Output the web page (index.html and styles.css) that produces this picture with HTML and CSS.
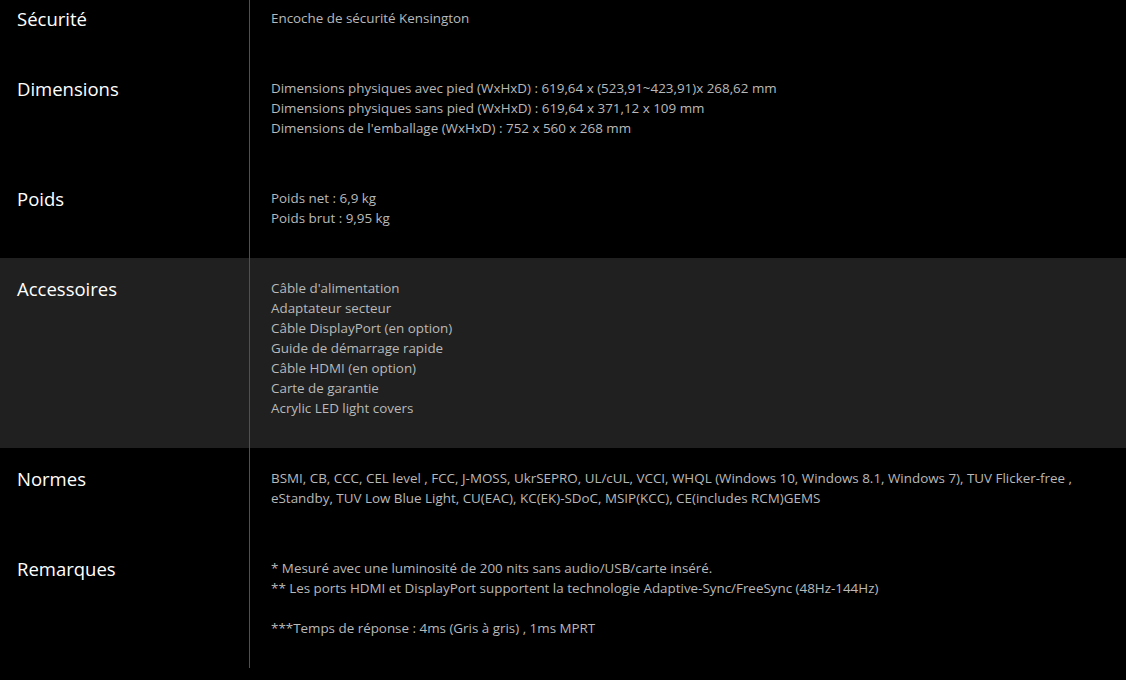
FILE: index.html
```html
<!DOCTYPE html>
<html lang="fr">
<head>
  <meta charset="UTF-8">
  <title>Caractéristiques</title>
  <link rel="stylesheet" href="styles.css">
</head>
<body>
  <div class="specs">
    <div class="spec first">
      <div class="spec-name">Sécurité</div>
      <div class="spec-value">
        <p>Encoche de sécurité Kensington</p>
      </div>
    </div>

    <div class="spec">
      <div class="spec-name">Dimensions</div>
      <div class="spec-value">
        <p>Dimensions physiques avec pied (WxHxD) : 619,64 x (523,91~423,91)x 268,62 mm</p>
        <p>Dimensions physiques sans pied (WxHxD) : 619,64 x 371,12 x 109 mm</p>
        <p>Dimensions de l'emballage (WxHxD) : 752 x 560 x 268 mm</p>
      </div>
    </div>

    <div class="spec">
      <div class="spec-name">Poids</div>
      <div class="spec-value">
        <p>Poids net : 6,9 kg</p>
        <p>Poids brut : 9,95 kg</p>
      </div>
    </div>

    <div class="spec shaded">
      <div class="spec-name">Accessoires</div>
      <div class="spec-value">
        <p>Câble d'alimentation</p>
        <p>Adaptateur secteur</p>
        <p>Câble DisplayPort (en option)</p>
        <p>Guide de démarrage rapide</p>
        <p>Câble HDMI (en option)</p>
        <p>Carte de garantie</p>
        <p>Acrylic LED light covers</p>
      </div>
    </div>

    <div class="spec">
      <div class="spec-name">Normes</div>
      <div class="spec-value">
        <p>BSMI, CB, CCC, CEL level , FCC, J-MOSS, UkrSEPRO, UL/cUL, VCCI, WHQL (Windows 10, Windows 8.1, Windows 7), TUV Flicker-free , eStandby, TUV Low Blue Light, CU(EAC), KC(EK)-SDoC, MSIP(KCC), CE(includes RCM)GEMS</p>
      </div>
    </div>

    <div class="spec">
      <div class="spec-name">Remarques</div>
      <div class="spec-value">
        <p>* Mesuré avec une luminosité de 200 nits sans audio/USB/carte inséré.</p>
        <p>** Les ports HDMI et DisplayPort supportent la technologie Adaptive-Sync/FreeSync (48Hz-144Hz)</p>
        <p>&nbsp;</p>
        <p>***Temps de réponse : 4ms (Gris à gris) , 1ms MPRT</p>
      </div>
    </div>
  </div>
</body>
</html>
```

FILE: styles.css
```css
body {
  margin: 0;
  background-color: #000;
  font-family: "Open Sans", Arial, sans-serif;
}

.specs {
  display: flex;
  flex-direction: column;
}

.spec {
  display: flex;
}

.spec.shaded {
  background-color: #202020;
}

.spec-name {
  width: 250px;
  flex-shrink: 0;
  box-sizing: border-box;
  padding: 19px 0 0 17px;
  border-right: 1px solid #505050;
  color: #fff;
  font-size: 18.5px;
  line-height: 24px;
}

.spec-value {
  flex: 1;
  padding: 20px 30px 30px 21px;
  color: #b9b9b9;
  font-size: 13.4px;
  line-height: 20px;
}

.spec.first .spec-name {
  padding-top: 7px;
}

.spec.first .spec-value {
  padding-top: 8px;
}

.spec-value p {
  margin: 0;
}
```
